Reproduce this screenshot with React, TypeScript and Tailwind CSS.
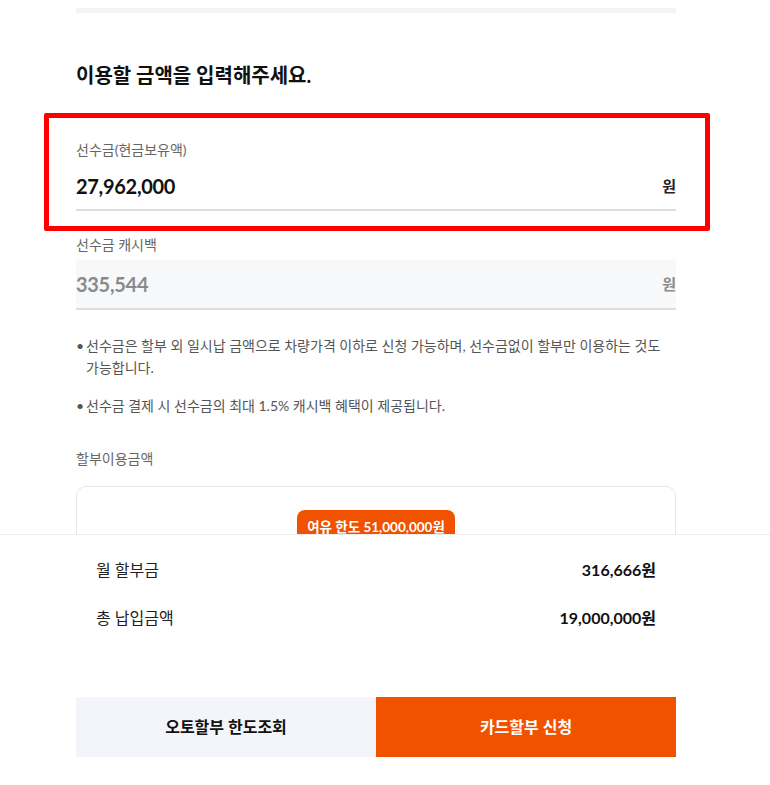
const font = { fontFamily: 'Lato, "Noto Sans CJK KR", "Noto Sans", sans-serif' };

function Bullet({ children }: { children: React.ReactNode }) {
  return (
    <li className="flex text-[14px] leading-[22px] text-[#555]">
      <span className="w-[10px] shrink-0">•</span>
      <span>{children}</span>
    </li>
  );
}

export default function App() {
  return (
    <div style={font} className="relative h-[785px] w-[770px] overflow-hidden bg-white">
      <div className="ml-[76px] w-[600px]">
        <div className="mt-[8px] h-[5px] bg-[#f3f4f7]" />

        <h2 className="mt-[48px] text-[20px] font-bold leading-[28px] text-[#111]">
          이용할 금액을 입력해주세요.
        </h2>

        {/* highlighted field */}
        <div className="mt-[24px] ml-[-32px] mr-[-34px] rounded-[2px] border-[5px] border-[#ff0000] pl-[27px] pr-[29px] pt-[22px] pb-[15px]">
          <p className="text-[14px] leading-[20px] text-[#666]">선수금(현금보유액)</p>
          <div className="mt-[6px] box-content flex h-[40px] items-center justify-between border-b-2 border-[#ddd] pb-[3px]">
            <span className="text-[20px] font-bold tracking-[-0.3px] text-[#111]">27,962,000</span>
            <span className="text-[15px] font-bold text-[#222]">원</span>
          </div>
        </div>

        <p className="mt-[4px] text-[14px] leading-[20px] text-[#666]">선수금 캐시백</p>
        <div className="mt-[5px] box-content flex h-[48px] items-center justify-between border-b-2 border-[#ddd] bg-[#f7f8fa]">
          <span className="text-[20px] font-bold tracking-[-0.3px] text-[#8a8a8a]">335,544</span>
          <span className="text-[15px] font-bold text-[#8a8a8a]">원</span>
        </div>

        <ul className="mt-[25px] flex flex-col gap-[16px]">
          <Bullet>
            선수금은 할부 외 일시납 금액으로 차량가격 이하로 신청 가능하며, 선수금없이 할부만 이용하는 것도
            가능합니다.
          </Bullet>
          <Bullet>선수금 결제 시 선수금의 최대 1.5% 캐시백 혜택이 제공됩니다.</Bullet>
        </ul>

        <p className="mt-[32px] text-[14px] leading-[20px] text-[#666]">할부이용금액</p>

        <div className="mt-[17px] h-[120px] rounded-[10px] border border-[#e8e8e8] pt-[23px]">
          <div className="mx-auto w-fit rounded-[8px] bg-[#f05200] px-[10px] py-[7px] text-[13.5px] font-bold leading-[20px] text-white">
            여유 한도 51,000,000원
          </div>
        </div>
      </div>

      {/* fixed bottom sheet */}
      <div className="absolute inset-x-0 bottom-0 h-[251px] border-t border-[#ececec] bg-white">
        <div className="ml-[76px] w-[600px] pt-[11px]">
          <div className="flex h-[48px] items-center justify-between px-[20px] text-[16px] text-[#222]">
            <span>월 할부금</span>
            <span className="font-bold text-[#111]">316,666원</span>
          </div>
          <div className="flex h-[48px] items-center justify-between px-[20px] text-[16px] text-[#222]">
            <span>총 납입금액</span>
            <span className="font-bold text-[#111]">19,000,000원</span>
          </div>
          <div className="mt-[55px] grid h-[60px] grid-cols-2">
            <button className="bg-[#f4f5fa] text-[16px] font-bold text-[#111]">오토할부 한도조회</button>
            <button className="bg-[#f05200] text-[16px] font-bold text-white">카드할부 신청</button>
          </div>
        </div>
      </div>
    </div>
  );
}
